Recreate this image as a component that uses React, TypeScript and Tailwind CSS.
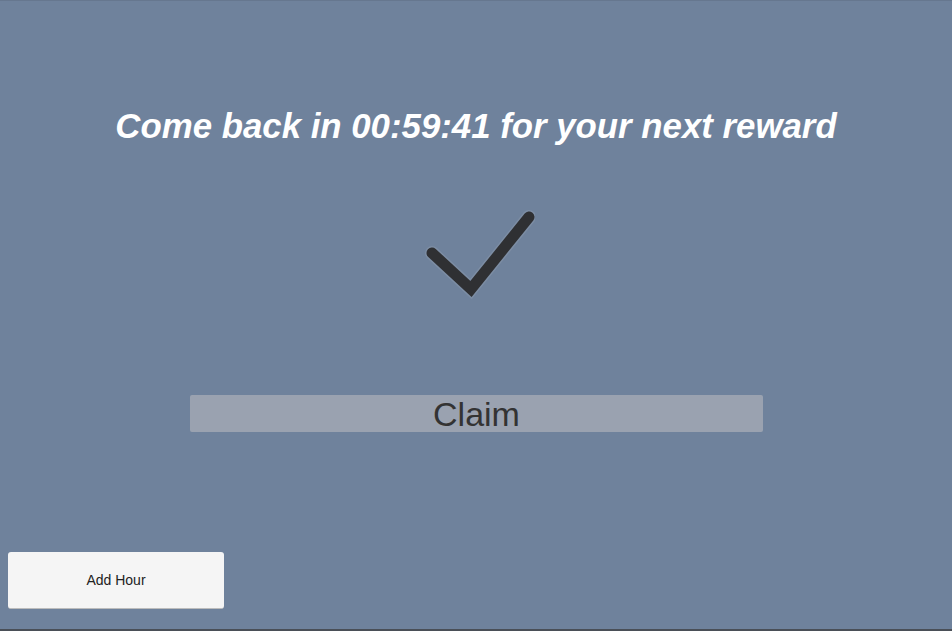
export default function App() {
  return (
    <div className="flex h-[631px] w-[952px] flex-col border-t border-b-2 border-t-[#66778f] border-b-[#4a4f57] bg-[#6f829c] font-['Liberation_Sans',Arial,sans-serif]">
      <h1 className="mt-[105px] text-center text-[34.8px] font-bold italic leading-[40px] text-white">
        Come back in 00:59:41 for your next reward
      </h1>
      <div className="mt-[61px] flex justify-center">
        <svg width="120" height="100" viewBox="0 0 120 100" className="ml-[-2px]">
          <path
            d="M17 46 L56 82 L114 10"
            fill="none"
            stroke="#8a97ab"
            strokeWidth="14"
            strokeLinecap="round"
            strokeLinejoin="miter"
            opacity="0.5"
          />
          <path
            d="M17 46 L56 82 L114 10"
            fill="none"
            stroke="#2f3033"
            strokeWidth="11"
            strokeLinecap="round"
            strokeLinejoin="miter"
          />
        </svg>
      </div>
      <div className="mt-[88px] flex justify-center">
        <button className="ml-[1px] flex h-[37px] w-[573px] items-center justify-center rounded-[2px] bg-[#9aa2b0] text-[34px] leading-none text-[#333333]">
          Claim
        </button>
      </div>
      <div className="flex-1" />
      <button className="mb-[20px] ml-[8px] h-[57px] w-[216px] rounded-[3px] border-b border-[#bcbcbc] bg-[#f5f5f5] text-[14px] text-[#222222]">
        Add Hour
      </button>
    </div>
  );
}
